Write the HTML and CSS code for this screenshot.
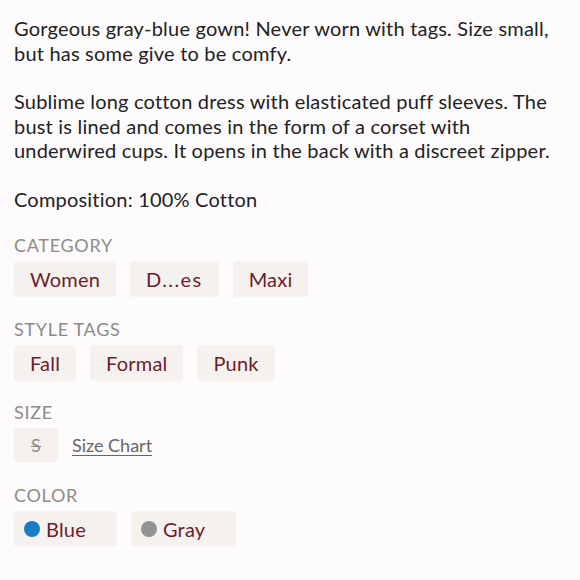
FILE: index.html
```html
<!DOCTYPE html>
<html>
<head>
<meta charset="utf-8">
<link rel="stylesheet" href="styles.css">
</head>
<body>
<div class="page">
  <div class="desc">
    <p>Gorgeous gray-blue gown! Never worn with tags. Size small, but has some give to be comfy.</p>
    <p>Sublime long cotton dress with elasticated puff sleeves. The bust is lined and comes in the form of a corset with underwired cups. It opens in the back with a discreet zipper.</p>
    <p>Composition: 100% Cotton</p>
  </div>

  <section class="group">
    <h3 class="label">CATEGORY</h3>
    <div class="chips">
      <span class="chip">Women</span>
      <span class="chip trunc">D...es</span>
      <span class="chip">Maxi</span>
    </div>
  </section>

  <section class="group">
    <h3 class="label">STYLE TAGS</h3>
    <div class="chips">
      <span class="chip">Fall</span>
      <span class="chip">Formal</span>
      <span class="chip">Punk</span>
    </div>
  </section>

  <section class="group">
    <h3 class="label">SIZE</h3>
    <div class="chips size-row">
      <span class="chip size"><s>S</s></span>
      <a class="size-chart">Size Chart</a>
    </div>
  </section>

  <section class="group">
    <h3 class="label">COLOR</h3>
    <div class="chips">
      <span class="chip color"><span class="dot blue"></span>Blue</span>
      <span class="chip color"><span class="dot gray"></span>Gray</span>
    </div>
  </section>
</div>
</body>
</html>
```
FILE: styles.css
```css
html, body {
  margin: 0;
  padding: 0;
  background: #fdfbfc;
}
.page {
  padding: 14px 14px 0 14px;
  font-family: "Lato", "Noto Sans", sans-serif;
  color: #222;
}
.desc {
  margin-top: 2px;
}
.desc p {
  margin: 0 0 24px 0;
  font-size: 20px;
  line-height: 24.5px;
  letter-spacing: 0.2px;
}
.label {
  margin: 0 0 6px 0;
  font-size: 18px;
  letter-spacing: 0.7px;
  font-weight: 400;
  color: #8d8b89;
  line-height: 20px;
}
.chips {
  display: flex;
  gap: 14px;
  align-items: center;
  margin-bottom: 21.5px;
}
.chip {
  display: flex;
  align-items: center;
  height: 36px;
  padding: 0 16px;
  background: #f4f1ee;
  border-radius: 4px;
  color: #6d1d2d;
  font-size: 20px;
  letter-spacing: 0.2px;
}
.chip.trunc {
  letter-spacing: 1.4px;
}
.chip.size {
  width: 44px;
  height: 34px;
  padding: 0;
  justify-content: center;
  color: #8d8b89;
  font-size: 18px;
}
.chip.size s {
  text-decoration-thickness: 1px;
}
.size-row {
  margin-top: 1px;
  margin-bottom: 22.5px;
}
.size-chart {
  color: #666;
  font-size: 18px;
  text-decoration: underline;
  text-underline-offset: 3px;
}
.chip.color {
  padding: 0 31px 0 10px;
  gap: 6px;
}
.dot {
  width: 16px;
  height: 16px;
  border-radius: 50%;
  display: inline-block;
}
.dot.blue { background: #1a7dc4; }
.dot.gray { background: #939393; }
```
